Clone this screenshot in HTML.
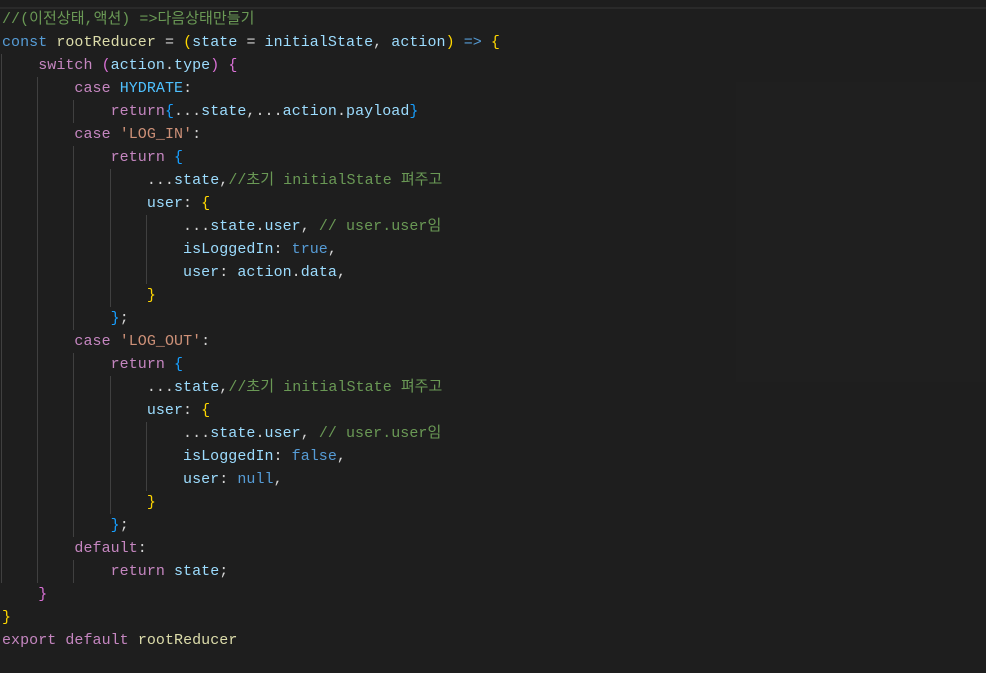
<!DOCTYPE html>
<html><head><meta charset="utf-8"><style>
html,body{margin:0;padding:0;background:#1e1e1e;width:986px;height:673px;overflow:hidden;position:relative}
.top{position:absolute;left:0;top:7px;width:986px;height:2px;background:#2a2a2a}
.box{position:absolute;left:736px;top:82px;width:250px;height:300px;background:#1f1f1f}
.code{position:absolute;left:2px;top:8px;font-family:"Liberation Mono","Noto Sans CJK KR",monospace;font-size:15px;letter-spacing:0.05px;line-height:23px;white-space:pre;color:#d4d4d4}
.g{position:absolute;width:1px;background:#404040}
.c{color:#6a9955}.k{color:#569cd6}.p{color:#c586c0}.f{color:#dcdcaa}.v{color:#9cdcfe}.n{color:#4fc1ff}.s{color:#ce9178}
.b1{color:#ffd700}.b2{color:#da70d6}.b3{color:#179fff}
</style></head><body>
<div class="top"></div>
<div class="box"></div>
<div class="g" style="left:1px;top:54px;height:529px"></div>
<div class="g" style="left:37px;top:77px;height:506px"></div>
<div class="g" style="left:73px;top:100px;height:23px"></div>
<div class="g" style="left:73px;top:146px;height:184px"></div>
<div class="g" style="left:73px;top:353px;height:184px"></div>
<div class="g" style="left:73px;top:560px;height:23px"></div>
<div class="g" style="left:110px;top:169px;height:138px"></div>
<div class="g" style="left:110px;top:376px;height:138px"></div>
<div class="g" style="left:146px;top:215px;height:69px"></div>
<div class="g" style="left:146px;top:422px;height:69px"></div>
<div class="code"><span class="c">//(이전상태,액션) =&gt;다음상태만들기</span>
<span class="k">const</span> <span class="f">rootReducer</span> = <span class="b1">(</span><span class="v">state</span> = <span class="v">initialState</span>, <span class="v">action</span><span class="b1">)</span> <span class="k">=&gt;</span> <span class="b1">{</span>
    <span class="p">switch</span> <span class="b2">(</span><span class="v">action</span>.<span class="v">type</span><span class="b2">)</span> <span class="b2">{</span>
        <span class="p">case</span> <span class="n">HYDRATE</span>:
            <span class="p">return</span><span class="b3">{</span>...<span class="v">state</span>,...<span class="v">action</span>.<span class="v">payload</span><span class="b3">}</span>
        <span class="p">case</span> <span class="s">'LOG_IN'</span>:
            <span class="p">return</span> <span class="b3">{</span>
                ...<span class="v">state</span>,<span class="c">//초기 initialState 펴주고</span>
                <span class="v">user</span>: <span class="b1">{</span>
                    ...<span class="v">state</span>.<span class="v">user</span>, <span class="c">// user.user임</span>
                    <span class="v">isLoggedIn</span>: <span class="k">true</span>,
                    <span class="v">user</span>: <span class="v">action</span>.<span class="v">data</span>,
                <span class="b1">}</span>
            <span class="b3">}</span>;
        <span class="p">case</span> <span class="s">'LOG_OUT'</span>:
            <span class="p">return</span> <span class="b3">{</span>
                ...<span class="v">state</span>,<span class="c">//초기 initialState 펴주고</span>
                <span class="v">user</span>: <span class="b1">{</span>
                    ...<span class="v">state</span>.<span class="v">user</span>, <span class="c">// user.user임</span>
                    <span class="v">isLoggedIn</span>: <span class="k">false</span>,
                    <span class="v">user</span>: <span class="k">null</span>,
                <span class="b1">}</span>
            <span class="b3">}</span>;
        <span class="p">default</span>:
            <span class="p">return</span> <span class="v">state</span>;
    <span class="b2">}</span>
<span class="b1">}</span>
<span class="p">export</span> <span class="p">default</span> <span class="f">rootReducer</span></div>
</body></html>
